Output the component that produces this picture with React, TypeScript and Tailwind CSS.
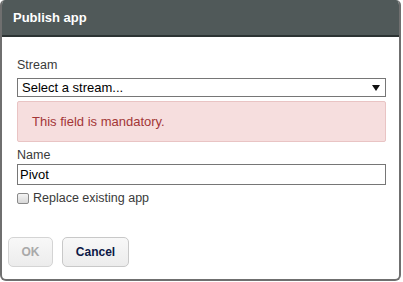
import React from 'react';

const PublishDialog: React.FC = () => {
  return (
    <div className="w-[403px] h-[282px] bg-white font-['Liberation_Sans',Arial,sans-serif]">
      <div className="w-[401px] h-[281px] flex flex-col border-2 border-t-0 border-[#6f6f6f] rounded-b-[6px] rounded-t-[5px] overflow-hidden">
        <div className="h-[37px] bg-[#505959] border-b-2 border-[#2c3333] flex items-center pl-[13px] -mx-[2px]">
          <span className="text-white font-bold text-[13px]">Publish app</span>
        </div>
        <div className="flex flex-col pl-[15px] pr-[13px] pt-[21px]">
          <label className="text-[12.5px] text-[#3a3a3a] leading-[14px]">Stream</label>
          <div className="mt-[6px] h-[19px] border border-[#767676] flex items-center justify-between pl-[4px] pr-[5px]">
            <span className="text-[13px] text-black leading-none">Select a stream...</span>
            <svg width="8" height="6" viewBox="0 0 8 6">
              <path d="M0 0h8L4 6z" fill="#111" />
            </svg>
          </div>
          <div className="mt-[4px] h-[41px] bg-[#f6dede] border border-[#e9c4c4] rounded-[2px] flex items-center pl-[14px]">
            <span className="text-[13px] text-[#a33636]">This field is mandatory.</span>
          </div>
          <label className="mt-[6px] text-[12.5px] text-[#3a3a3a] leading-[14px]">Name</label>
          <div className="mt-[2px] h-[21px] border border-[#767676] flex items-center pl-[2px]">
            <span className="text-[13px] text-black leading-none">Pivot</span>
          </div>
          <div className="mt-[6px] flex items-center gap-[4px]">
            <span className="w-[12px] h-[11px] border border-[#8a8a8a] rounded-[2px] bg-gradient-to-b from-[#f4f4f4] to-[#d8d8d8]" />
            <span className="text-[12.5px] text-[#3a3a3a] leading-[15px]">Replace existing app</span>
          </div>
        </div>
        <div className="mt-auto mb-[12px] flex gap-[9px] pl-[6px]">
          <button className="w-[45px] h-[30px] rounded-[5px] border border-[#d4d4d4] bg-gradient-to-b from-[#f8f8f8] to-[#ececec] text-[12px] font-bold text-[#a9a9a9]">
            OK
          </button>
          <button className="w-[67px] h-[30px] rounded-[5px] border border-[#c8c8c8] bg-gradient-to-b from-[#f8f8f8] to-[#ececec] text-[12px] font-bold text-[#0c1846]">
            Cancel
          </button>
        </div>
      </div>
    </div>
  );
};

export default function App() {
  return <PublishDialog />;
}
